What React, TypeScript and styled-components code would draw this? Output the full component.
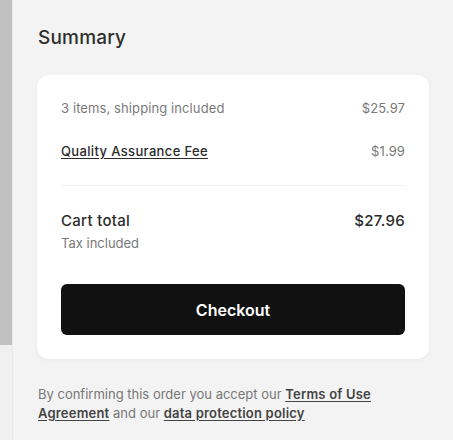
import React from "react";
import styled, { createGlobalStyle } from "styled-components";

const GlobalStyle = createGlobalStyle`
  html, body {
    margin: 0;
    padding: 0;
    background: #f3f3f3;
    font-family: Inter, "Noto Sans", sans-serif;
    color: #2b2b2b;
  }
`;

const Page = styled.div`
  display: flex;
  min-height: 440px;
`;

const Rail = styled.div`
  width: 12px;
  flex-shrink: 0;
  background: #f0f0f0;
  border-right: 1px solid #e9e9e9;
`;

const Thumb = styled.div`
  height: 345px;
  background: #c1c1c1;
`;

const Main = styled.main`
  width: 392px;
  padding: 26px 0 0 24px;
`;

const Title = styled.h2`
  margin: 0 0 25px 1px;
  font-size: 19px;
  line-height: 24px;
  font-weight: 500;
  letter-spacing: 0.2px;
  color: #2e2e2e;
`;

const Card = styled.section`
  background: #fff;
  border-radius: 12px;
  padding: 24px;
  box-shadow: 0 1px 4px rgba(0, 0, 0, 0.04);
`;

const Row = styled.div<{ $gap?: number }>`
  display: flex;
  justify-content: space-between;
  align-items: center;
  font-size: 13px;
  line-height: 18px;
  letter-spacing: 0.1px;
  color: #7a7a7a;
  margin-bottom: ${(p) => p.$gap ?? 0}px;
`;

const FeeLink = styled.a`
  color: #2b2b2b;
  font-weight: 500;
  letter-spacing: 0.35px;
  text-decoration: underline;
  text-underline-offset: 2px;
`;

const Divider = styled.hr`
  border: 0;
  border-top: 1px solid #eeeeee;
  margin: 25px 0 25px;
`;

const TotalRow = styled.div`
  display: flex;
  justify-content: space-between;
  align-items: center;
  font-size: 15px;
  line-height: 20px;
  font-weight: 500;
  letter-spacing: 0.3px;
  color: #2b2b2b;
`;

const Note = styled.div`
  margin-top: 3px;
  font-size: 13px;
  line-height: 18px;
  color: #7a7a7a;
`;

const CheckoutButton = styled.button`
  display: block;
  width: 100%;
  height: 51px;
  margin-top: 32px;
  border: 0;
  border-radius: 6px;
  background: #111111;
  color: #fff;
  font-family: inherit;
  font-size: 16px;
  font-weight: 600;
  cursor: pointer;
`;

const Legal = styled.p`
  margin: 26px 0 0 1px;
  font-size: 13px;
  line-height: 18.5px;
  color: #777;

  a {
    color: #444;
    font-weight: 600;
    letter-spacing: 0.2px;
    text-decoration: underline;
    text-underline-offset: 2px;
  }
`;

const App: React.FC = () => (
  <>
    <GlobalStyle />
    <Page>
      <Rail>
        <Thumb />
      </Rail>
      <Main>
        <Title>Summary</Title>
        <Card>
          <Row $gap={25}>
            <span>3 items, shipping included</span>
            <span>$25.97</span>
          </Row>
          <Row>
            <FeeLink href="#fee">Quality Assurance Fee</FeeLink>
            <span>$1.99</span>
          </Row>
          <Divider />
          <TotalRow>
            <span>Cart total</span>
            <span>$27.96</span>
          </TotalRow>
          <Note>Tax included</Note>
          <CheckoutButton>Checkout</CheckoutButton>
        </Card>
        <Legal>
          By confirming this order you accept our <a href="#terms">Terms of Use Agreement</a> and our{" "}
          <a href="#privacy">data protection policy</a>
        </Legal>
      </Main>
    </Page>
  </>
);

export default App;
